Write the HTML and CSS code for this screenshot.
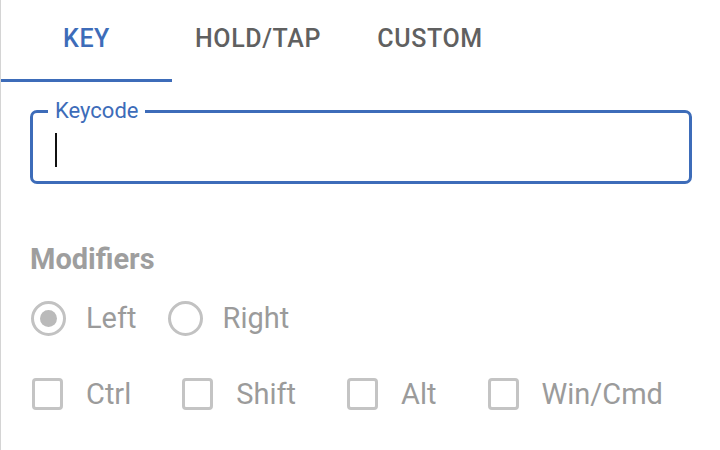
FILE: index.html
```html
<!DOCTYPE html>
<html>
<head>
<meta charset="utf-8">
<link rel="stylesheet" href="styles.css">
</head>
<body>
<div class="panel">
  <div class="tabs">
    <div class="tab active">KEY</div>
    <div class="tab">HOLD/TAP</div>
    <div class="tab">CUSTOM</div>
  </div>
  <div class="content">
    <fieldset class="field">
      <legend class="field-label">Keycode</legend>
      <span class="caret"></span>
    </fieldset>
    <div class="section-title">Modifiers</div>
    <div class="radio-row">
      <label class="radio checked"><span class="radio-icon"><span class="radio-dot"></span></span><span class="opt-text">Left</span></label>
      <label class="radio"><span class="radio-icon"></span><span class="opt-text">Right</span></label>
    </div>
    <div class="check-row">
      <label class="check"><span class="check-box"></span><span class="opt-text">Ctrl</span></label>
      <label class="check"><span class="check-box"></span><span class="opt-text">Shift</span></label>
      <label class="check"><span class="check-box"></span><span class="opt-text">Alt</span></label>
      <label class="check"><span class="check-box"></span><span class="opt-text">Win/Cmd</span></label>
    </div>
  </div>
</div>
</body>
</html>
```
FILE: styles.css
```css
html, body {
  margin: 0;
  padding: 0;
  background: #ffffff;
}
body {
  font-family: Roboto, "Liberation Sans", sans-serif;
  width: 720px;
  height: 450px;
  overflow: hidden;
}
.panel {
  height: 450px;
  border-left: 1px solid #d4d4d4;
  box-sizing: border-box;
}
.tabs {
  display: flex;
  height: 82px;
}
.tab {
  min-width: 172px;
  padding: 0 22px;
  box-sizing: border-box;
  display: flex;
  align-items: center;
  justify-content: center;
  font-size: 25px;
  font-weight: 500;
  letter-spacing: 0.6px;
  color: #606060;
  height: 82px;
  padding-bottom: 3px;
  border-bottom: 3px solid transparent;
}
.tab:first-child {
  min-width: 171px;
}
.tab.active {
  color: #3d6cb9;
  border-bottom-color: #3d6cb9;
}
.content {
  padding: 0 28px 0 29px;
}
.field {
  margin: 18px 0 0 0;
  padding: 0 0 0 22px;
  height: 84px;
  box-sizing: border-box;
  border: 3px solid #3d6cb9;
  border-radius: 7px;
  display: flex;
  align-items: center;
  padding-bottom: 3px;
}
.field-label {
  margin-left: -7px;
  padding: 0 7px;
  font-size: 22px;
  line-height: 22px;
  color: #3d6cb9;
}
.caret {
  display: block;
  width: 2px;
  height: 34px;
  background: #111;
}
.section-title {
  margin-top: 58px;
  font-size: 29px;
  font-weight: 700;
  line-height: 34px;
  color: #9e9e9e;
}
.radio-row {
  display: flex;
  align-items: center;
  gap: 30px;
  margin-top: 24px;
  height: 36px;
}
.radio, .check {
  display: flex;
  align-items: center;
}
.radio-icon {
  width: 35px;
  height: 35px;
  box-sizing: border-box;
  border: 3px solid #c2c2c2;
  border-radius: 50%;
  display: flex;
  align-items: center;
  justify-content: center;
  margin-right: 20px;
  margin-left: 1px;
}
.radio-dot {
  width: 17px;
  height: 17px;
  border-radius: 50%;
  background: #bababa;
}
.opt-text {
  font-size: 29px;
  line-height: 34px;
  color: #9b9b9b;
}
.check-row {
  display: flex;
  align-items: center;
  gap: 51px;
  margin-top: 42px;
  height: 32px;
}
.check-box {
  width: 31px;
  height: 32px;
  box-sizing: border-box;
  border: 3px solid #c4c4c4;
  border-radius: 4px;
  margin-right: 23px;
  margin-left: 2px;
}
.check + .check .check-box {
  margin-left: 0;
}
```
